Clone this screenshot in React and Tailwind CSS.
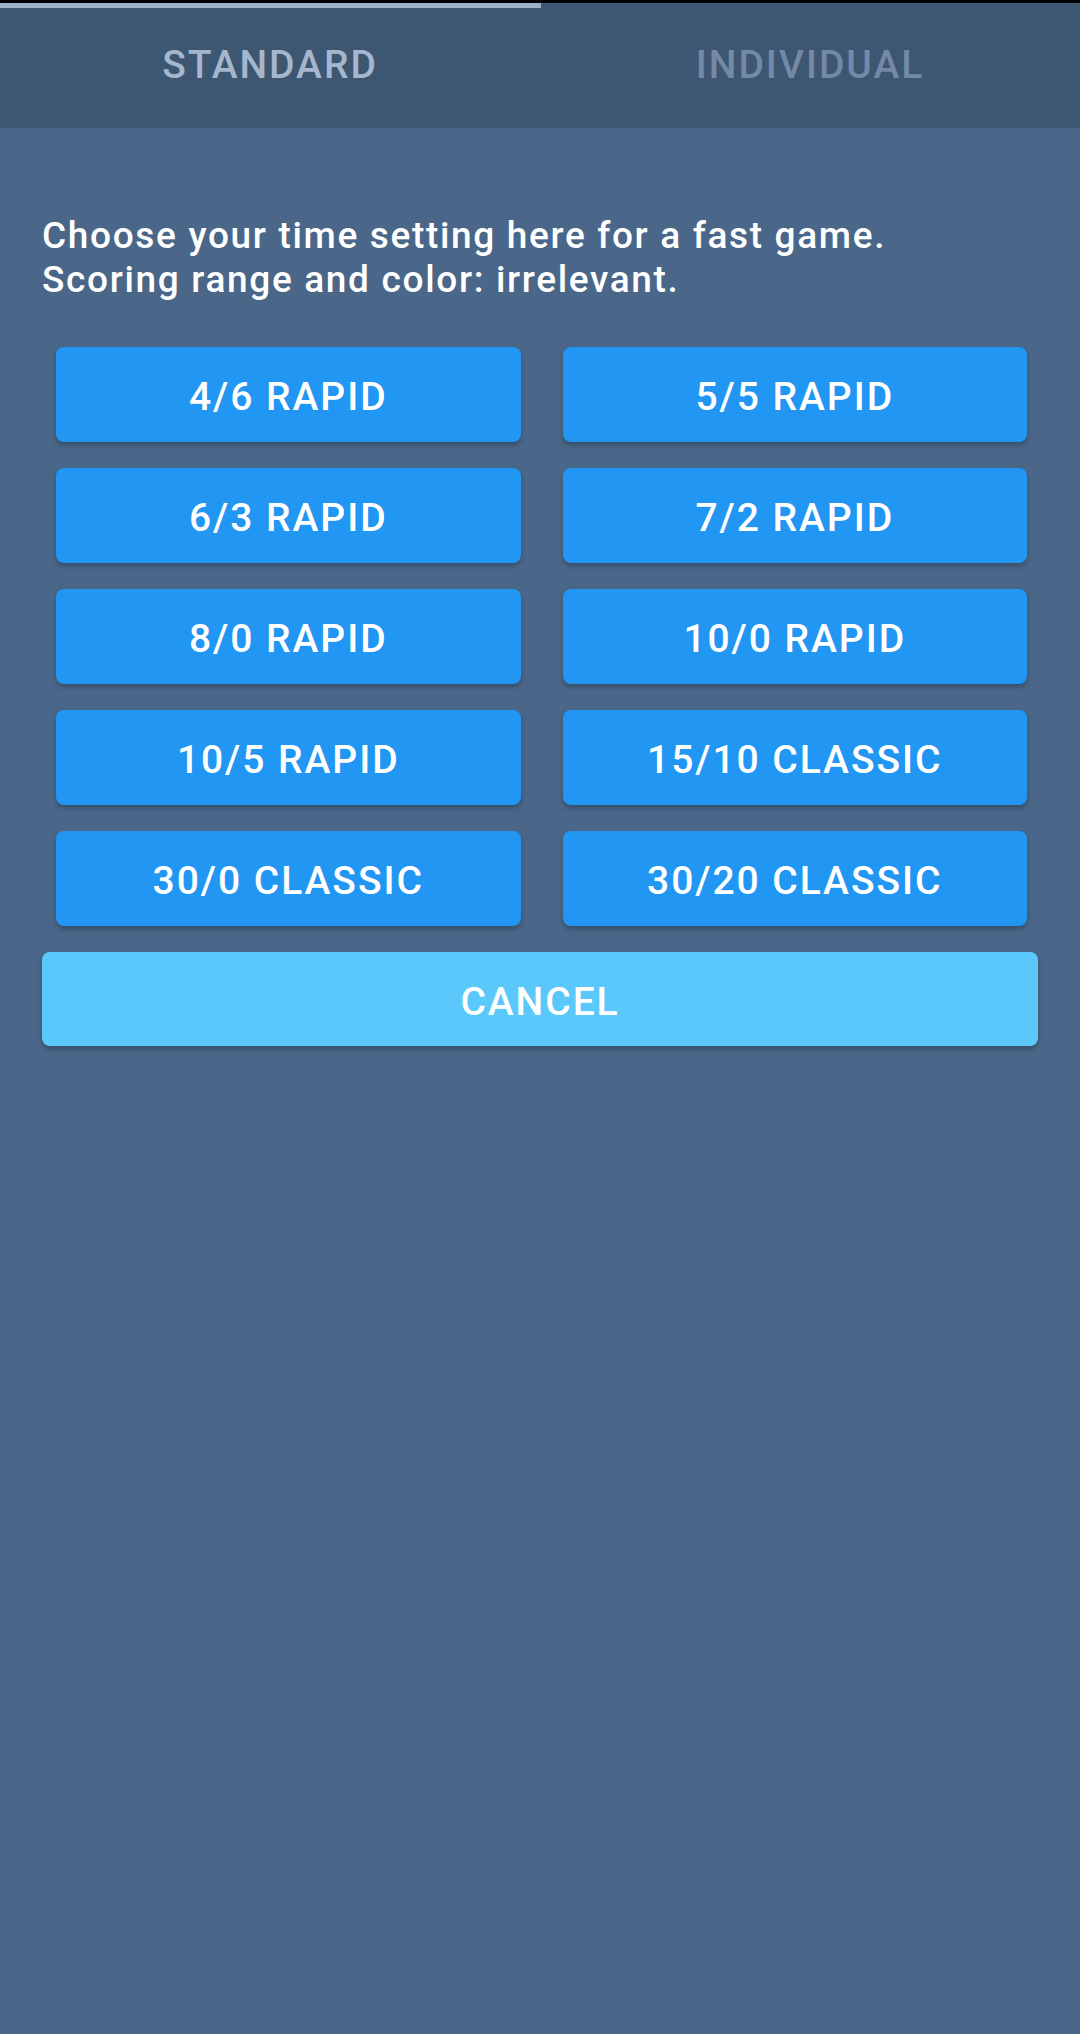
import React from 'react';

const presets = [
  '4/6 RAPID', '5/5 RAPID',
  '6/3 RAPID', '7/2 RAPID',
  '8/0 RAPID', '10/0 RAPID',
  '10/5 RAPID', '15/10 CLASSIC',
  '30/0 CLASSIC', '30/20 CLASSIC',
];

export default function App() {
  return (
    <div className="min-h-[2034px] w-[1080px] bg-[#4a6789] font-['Roboto',sans-serif]">
      <div className="bg-[#3d5672]">
        <div className="h-[3px] bg-black" />
        <div className="flex h-[5px]">
          <div className="w-[541px] bg-[#9fb1c9]" />
        </div>
        <div className="flex h-[120px] pb-[6px]">
          <div className="flex flex-1 items-center justify-center text-[39px] font-medium tracking-[0.05em] text-[#a6b6cd]">STANDARD</div>
          <div className="flex flex-1 items-center justify-center text-[39px] font-medium tracking-[0.05em] text-[#7489a4]">INDIVIDUAL</div>
        </div>
      </div>

      <div className="px-[42px] pt-[86px]">
        <p className="text-[37px] font-medium leading-[44px] tracking-[0.045em] text-white">
          Choose your time setting here for a fast game.<br />
          Scoring range and color: irrelevant.
        </p>

        <div className="mt-[45px] grid grid-cols-2 gap-x-[42px] gap-y-[26px] pl-[14px] pr-[11px]">
          {presets.map(p => (
            <button
              key={p}
              className="flex h-[95px] items-center justify-center rounded-[8px] bg-[#2196f3] pt-[6px] text-[39px] font-medium tracking-[0.05em] text-white shadow-[0_3px_5px_rgba(0,0,0,0.25)]"
            >
              {p}
            </button>
          ))}
        </div>

        <button className="mt-[26px] flex h-[94px] w-full items-center justify-center rounded-[8px] bg-[#5ac8fb] pt-[6px] text-[39px] font-medium tracking-[0.05em] text-white shadow-[0_3px_5px_rgba(0,0,0,0.25)]">
          CANCEL
        </button>
      </div>
    </div>
  );
}
